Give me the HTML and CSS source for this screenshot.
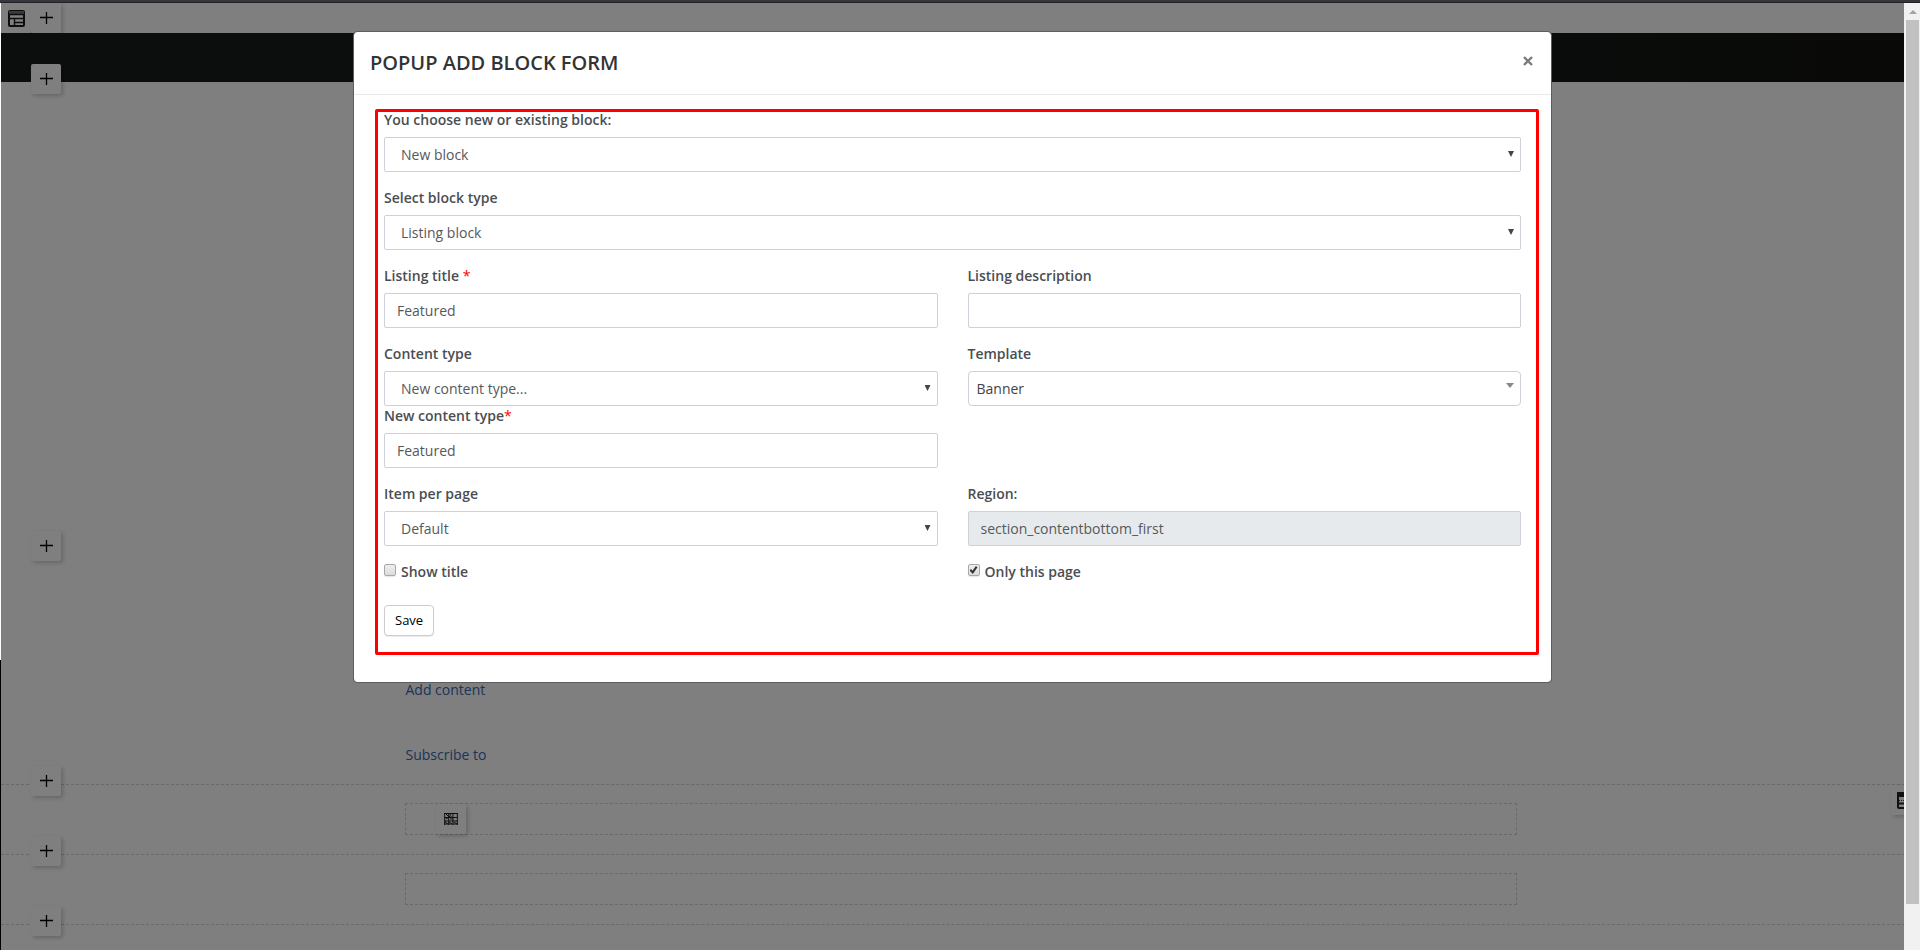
FILE: index.html
```html
<!DOCTYPE html>
<html lang="en">
<head>
<meta charset="utf-8">
<title>Popup add block form</title>
<link rel="stylesheet" href="styles.css">
</head>
<body>
<svg class="defs" aria-hidden="true">
  <symbol id="plus" viewBox="0 0 14 14"><path d="M7.500 1v12M1 6.500h13" fill="none" stroke="#000" stroke-width="1.300"/></symbol>
</svg>
<div class="window-edge"></div>
<div class="viewport">
  <div class="page">
    <div class="toolbar">
      <button class="tool" type="button" aria-label="Layout">
        <svg width="17" height="17" viewBox="0 0 17 17"><rect x="1" y="1" width="15" height="15" rx="1" fill="none" stroke="#1b1b1f" stroke-width="2"/><rect x="1" y="1" width="15" height="3" fill="#77777c"/><path d="M0 4.5h17M1 8.5h15M6.5 8v8M7 12.5h9" stroke="#1b1b1f" stroke-width="1.4"/></svg>
      </button>
      <button class="tool" type="button" aria-label="Add"><svg width="14" height="14"><use href="#plus"/></svg></button>
    </div>
    <div class="banner">
      <button class="tool tool-pin" type="button" aria-label="Add"><svg width="14" height="14"><use href="#plus"/></svg></button>
    </div>
    <div class="hero"></div>
    <div class="links">
      <button class="tool tool-pin" type="button" aria-label="Add"><svg width="14" height="14"><use href="#plus"/></svg></button>
      <div class="container">
        <a href="#">Add content</a>
        <a href="#">Subscribe to</a>
      </div>
    </div>
    <div class="section">
      <button class="tool tool-pin" type="button" aria-label="Add"><svg width="14" height="14"><use href="#plus"/></svg></button>
      <div class="container slot">
        <button class="tool" type="button" aria-label="Blocks">
          <svg width="14" height="12" viewBox="0 0 14 12"><path d="M0 .5h14M0 4.5h14M0 8h14M0 11h14M.7 0v12M4.7 0v12M9 0v12M13.3 0v12" fill="none" stroke="#222" stroke-width="1"/><path d="M2 1l3 3M7 1l-2 3h3M2 6l3-2M6 6h3M1 9l3 2M5 9l3 2M10 9l3 2" fill="none" stroke="#222" stroke-width="1"/></svg>
        </button>
      </div>
      <button class="tool tool-right" type="button" aria-label="Section layout">
        <svg width="19" height="17" viewBox="0 0 19 17"><rect x="1" y="1" width="17" height="15" rx="1" fill="none" stroke="#222" stroke-width="2"/><path d="M0 2.5h19" stroke="#222" stroke-width="5"/><path d="M2 11.5h15" stroke="#222" stroke-width="2"/><path d="M2 8.5h15" stroke="#444" stroke-dasharray="1 1"/></svg>
      </button>
    </div>
    <div class="section">
      <button class="tool tool-pin" type="button" aria-label="Add"><svg width="14" height="14"><use href="#plus"/></svg></button>
      <div class="container slot"></div>
    </div>
    <div class="section">
      <button class="tool tool-pin" type="button" aria-label="Add"><svg width="14" height="14"><use href="#plus"/></svg></button>
    </div>
  </div>

  <div class="backdrop">
    <div class="modal" role="dialog" aria-labelledby="modal-title">
      <div class="modal-header">
        <h1 id="modal-title">POPUP ADD BLOCK FORM</h1>
        <button class="close" type="button" aria-label="Close"><svg width="10" height="10" viewBox="0 0 10 10"><path d="M1 1l8 8M9 1L1 9" stroke="#7b7b7b" stroke-width="2.4"/></svg></button>
      </div>
      <form class="modal-body">
        <div class="field">
          <label for="source">You choose new or existing block:</label>
          <div class="select"><select id="source"><option>New block</option></select></div>
        </div>
        <div class="field">
          <label for="type">Select block type</label>
          <div class="select"><select id="type"><option>Listing block</option></select></div>
        </div>
        <div class="row">
          <div class="field">
            <label for="title">Listing title <span class="req">*</span></label>
            <input class="text" id="title" type="text" value="Featured">
          </div>
          <div class="field">
            <label for="desc">Listing description</label>
            <input class="text" id="desc" type="text">
          </div>
        </div>
        <div class="row">
          <div class="field">
            <label for="ctype">Content type</label>
            <div class="select"><select id="ctype"><option>New content type...</option></select></div>
            <label for="newtype">New content type<span class="req">*</span></label>
            <input class="text" id="newtype" type="text" value="Featured">
          </div>
          <div class="field">
            <label for="template">Template</label>
            <div class="select select-rich"><select id="template"><option>Banner</option></select></div>
          </div>
        </div>
        <div class="row">
          <div class="field">
            <label for="perpage">Item per page</label>
            <div class="select"><select id="perpage"><option>Default</option></select></div>
          </div>
          <div class="field">
            <label for="region">Region:</label>
            <input class="text" id="region" type="text" value="section_contentbottom_first" readonly>
          </div>
        </div>
        <div class="row checks">
          <label class="check"><input type="checkbox">Show title</label>
          <label class="check"><input type="checkbox" checked>Only this page</label>
        </div>
        <button class="save" type="submit">Save</button>
        <div class="highlight"></div>
      </form>
    </div>
  </div>
  <div class="scrollbar"><svg class="up" width="8" height="4" viewBox="0 0 8 4"><path d="M0 4l4-4 4 4z" fill="#a3a3a3"/></svg><div class="thumb"></div></div>
</div>
</body>
</html>
```
FILE: styles.css
```css
* { box-sizing: border-box; }
body {
  margin: 0;
  height: 100vh;
  display: flex;
  flex-direction: column;
  overflow: hidden;
  font: 14px/22px "Open Sans", sans-serif;
  color: #4a4e52;
}
button, input, select { font: inherit; color: inherit; margin: 0; }
.defs { position: absolute; width: 0; height: 0; }
.window-edge { height: 3px; flex: none; background: #36363c; border-bottom: 1px solid #222226; }

.viewport {
  position: relative;
  flex: 1;
  min-height: 0;
  padding-left: 1px;
  overflow: hidden;
  background: linear-gradient(#fff 657px, #000 657px);
}
.page { height: 100%; overflow: hidden; background: #fff; }
.toolbar { display: flex; height: 30px; }
.tool {
  display: flex;
  align-items: center;
  justify-content: center;
  width: 30px;
  height: 30px;
  padding: 0;
  border: 0;
  border-radius: 2px;
  background: #fff;
  box-shadow: 2px 2px 4px rgba(0, 0, 0, .2);
}
.tool-pin { position: absolute; left: 30px; top: -19px; z-index: 1; }
.tool-right { position: absolute; right: -1px; top: 0; }
.banner { position: relative; height: 49px; background: linear-gradient(90deg, #191d1b, #141c18 70%, #12140f); }
.banner .tool-pin { top: auto; bottom: -12px; }
.hero { height: 467px; }
.links { position: relative; height: 235px; padding-top: 130px; }
.links .tool-pin { top: -18px; }
.container { width: 58%; max-width: 1112px; margin: 0 auto; }
.links .container { display: flex; flex-direction: column; align-items: flex-start; gap: 43px; padding-left: 1px; }
.links a { color: #3a68b4; text-decoration: none; }
.section { position: relative; height: 70px; padding-top: 18px; border-top: 1px dashed #d2d2d2; }
.slot { height: 32px; padding-left: 30px; border: 1px dashed #d2d2d2; }

.backdrop {
  position: absolute;
  inset: 0 16px 0 1px;
  z-index: 2;
  display: flex;
  align-items: flex-start;
  justify-content: center;
  padding: 28px 16px;
  background: rgba(0, 0, 0, .5);
}
.modal {
  width: 100%;
  max-width: 1199px;
  border: 1px solid #5e5e5e;
  border-radius: 4px;
  background: #fff;
  background-clip: padding-box;
}
.modal-header {
  display: flex;
  justify-content: space-between;
  align-items: center;
  padding: 15px 18px 15px 16px;
  border-bottom: 1px solid #e9e9e9;
}
.modal-header h1 { margin: 0; font-size: 20px; line-height: 32px; font-weight: 600; color: #333; }
.close { display: flex; padding: 0 0 4px; border: 0; background: none; }
.modal-body { position: relative; padding: 15px 30px 46px; }

.row { display: grid; grid-template-columns: 1fr 1fr; gap: 30px; }
.field { margin-bottom: 16px; }
.field label { display: block; margin-bottom: 7px; }
label { font-weight: 600; line-height: 20px; }
.req { color: #f00; font-weight: 400; }
.text, select {
  display: block;
  width: 100%;
  height: 35px;
  padding: 0 12px;
  border: 1px solid #ced0da;
  border-radius: 2px;
  background: #fff;
  color: #55595c;
}
.text[readonly] { background: #e7eaed; }
.select { position: relative; }
select { appearance: none; padding: 0 24px 0 16px; }
.select::after {
  content: "";
  position: absolute;
  right: 7px;
  top: 14px;
  width: 6px;
  height: 6px;
  background: #3f464c;
  clip-path: polygon(0 0, 100% 0, 50% 100%);
  pointer-events: none;
}
.select-rich select { padding-left: 8px; border-radius: 4px; color: #444; }
.select-rich::after { width: 8px; height: 5px; top: 12px; background: #888; }
.checks { margin-bottom: 23px; }
.check { display: flex; align-items: flex-start; gap: 4px; }
.check input {
  appearance: none;
  width: 12px;
  height: 12px;
  margin: 2px 1px 0 0;
  border: 1px solid #a8a8a8;
  border-radius: 2px;
  background: linear-gradient(#eee, #dcdcdc);
  box-shadow: 0 1px 1px rgba(0, 0, 0, .1);
}
.check input:checked::before {
  content: "";
  display: block;
  width: 8px;
  height: 8px;
  margin: 1px;
  background: #333;
  clip-path: polygon(0 55%, 20% 38%, 38% 58%, 80% 0, 100% 15%, 42% 100%);
}
.save {
  display: block;
  height: 31px;
  padding: 0 10px 2px;
  border: 1px solid #ccc;
  border-radius: 4px;
  background: #fff;
  color: #000;
  font-size: 13px;
  box-shadow: 0 1px 1px rgba(0, 0, 0, .08);
}
.highlight {
  position: absolute;
  inset: 14px 12px 27px 21px;
  border: 3px solid #f00;
  border-radius: 2px;
  pointer-events: none;
}

.scrollbar {
  position: absolute;
  inset: 0 0 0 auto;
  z-index: 3;
  display: flex;
  flex-direction: column;
  align-items: center;
  width: 16px;
  padding: 7px 1px 46px 2px;
  background: #f1f1f1;
}
.up { flex: none; margin-bottom: 6px; }
.thumb { flex: 1; width: 100%; background: #c1c1c1; }
```
